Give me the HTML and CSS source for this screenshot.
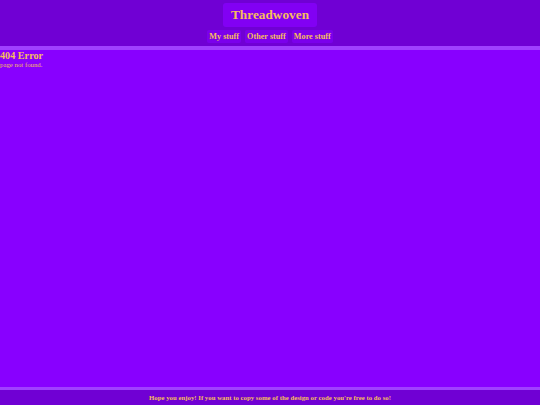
FILE: index.html
```html
<!DOCTYPE html>
<html>
<head>
<meta charset="utf-8">
<title>Threadwoven</title>
<link rel="stylesheet" href="styles.css">
</head>
<body>
<div class="page">
  <header class="top">
    <div class="title">Threadwoven</div>
    <nav class="nav">
      <a class="nav-link" href="#">My stuff</a>
      <a class="nav-link" href="#">Other stuff</a>
      <a class="nav-link" href="#">More stuff</a>
    </nav>
  </header>
  <main class="content">
    <h1 class="err">404 Error</h1>
    <p class="msg">page not found.</p>
  </main>
  <footer class="foot">Hope you enjoy! If you want to copy some of the design or code you're free to do so!</footer>
</div>
</body>
</html>
```
FILE: styles.css
```css
html, body {
  margin: 0;
  padding: 0;
  height: 100%;
}
body {
  background: #8800ff;
  font-family: "Liberation Serif", "Times New Roman", serif;
  color: #f7be5c;
}
.page {
  display: flex;
  flex-direction: column;
  min-height: 100%;
}
.top {
  background: #7000d4;
  border-bottom: 4px solid #a040ff;
  display: flex;
  flex-direction: column;
  align-items: center;
  padding-top: 3px;
  padding-bottom: 3px;
  gap: 3px;
}
.title {
  background: #8200f4;
  border-radius: 3px;
  font-weight: bold;
  font-size: 13.3px;
  line-height: 24px;
  padding: 0 8px;
}
.nav {
  display: flex;
  gap: 4px;
}
.nav-link {
  background: #7b00ec;
  color: #f7be5c;
  text-decoration: none;
  font-weight: bold;
  font-size: 8.2px;
  line-height: 13px;
  padding: 0 2px;
  border-radius: 2px;
}
.content {
  flex: 1;
  padding-top: 0;
}
.err {
  margin: 0;
  font-size: 10.2px;
  line-height: 11px;
  font-weight: bold;
}
.msg {
  margin: 0;
  font-size: 6.8px;
  line-height: 8px;
}
.foot {
  background: #7000d4;
  border-top: 3px solid #a040ff;
  text-align: center;
  font-weight: bold;
  font-size: 6.8px;
  line-height: 15px;
}
```
